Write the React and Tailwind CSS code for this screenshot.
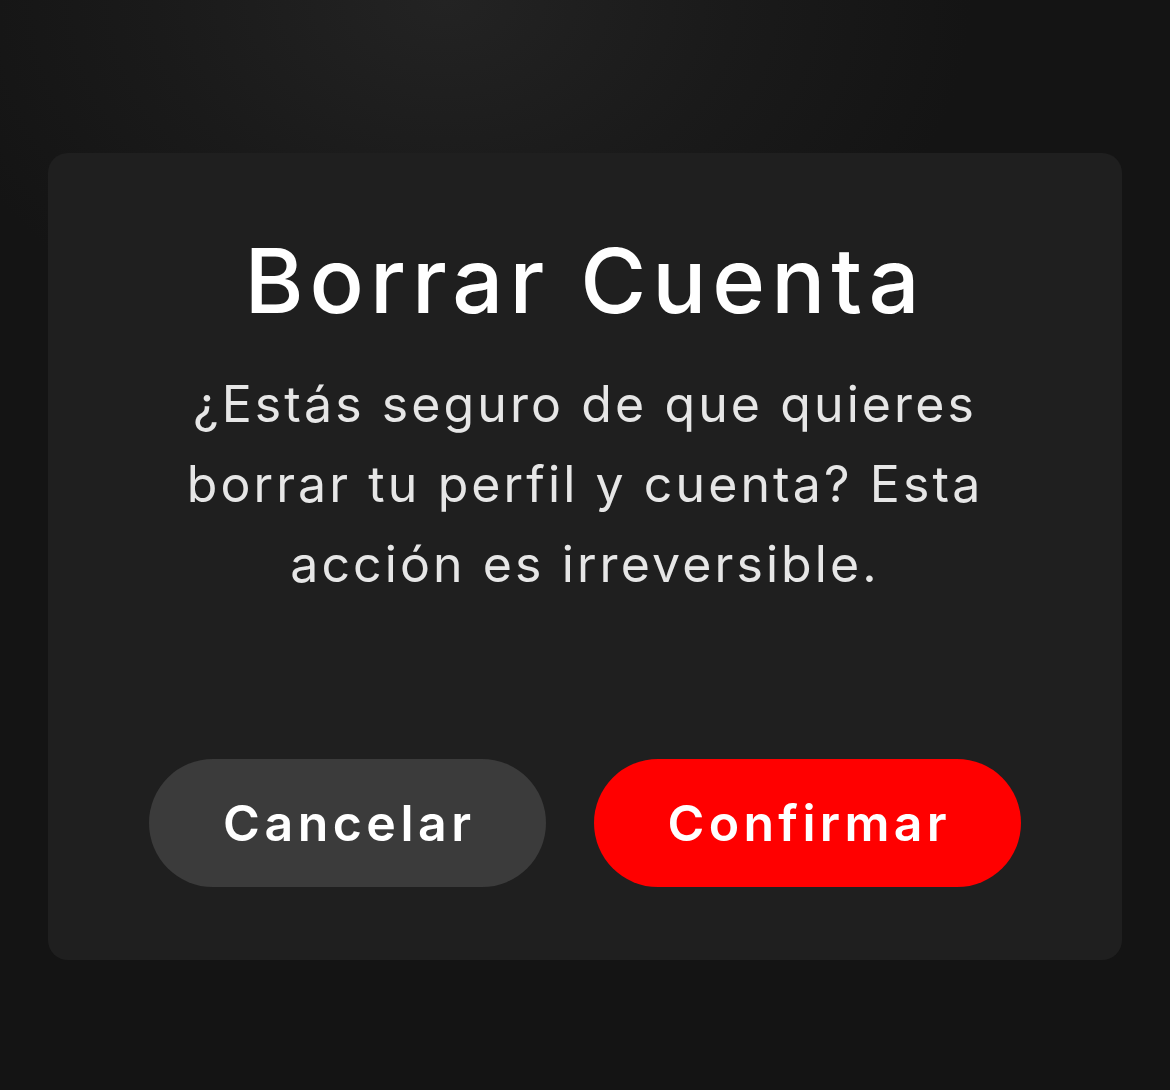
import React from "react";

export default function App() {
  return (
    <div
      className="w-full min-h-[1090px] h-[1090px] overflow-hidden px-[48px] pt-[153px] bg-[#141414] bg-[radial-gradient(ellipse_45%_35%_at_38%_0%,#232323_0%,#1a1a1a_55%,#141414_100%)]"
      style={{ fontFamily: "Inter, 'Noto Sans', sans-serif" }}
    >
      <div className="h-[807px] rounded-[20px] bg-[#1f1f1f] flex flex-col items-center pt-[78px] pb-[73px]">
        <h1 className="text-[90px] leading-[100px] font-medium tracking-[6px] text-white">Borrar Cuenta</h1>
        <p className="mt-[33px] text-[50px] leading-[80px] tracking-[3.1px] text-[#e6e6e6] text-center">
          ¿Estás seguro de que quieres
          <br />
          borrar tu perfil y cuenta? Esta
          <br />
          acción es irreversible.
        </p>
        <div className="mt-auto flex gap-[48px]">
          <button className="h-[128px] pl-[74px] pr-[70px] rounded-full bg-[#3b3b3b] text-white text-[50px] font-semibold tracking-[4.5px]">
            Cancelar
          </button>
          <button className="h-[128px] pl-[74px] pr-[70px] rounded-full bg-[#ff0000] text-white text-[50px] font-semibold tracking-[4.3px]">
            Confirmar
          </button>
        </div>
      </div>
    </div>
  );
}
